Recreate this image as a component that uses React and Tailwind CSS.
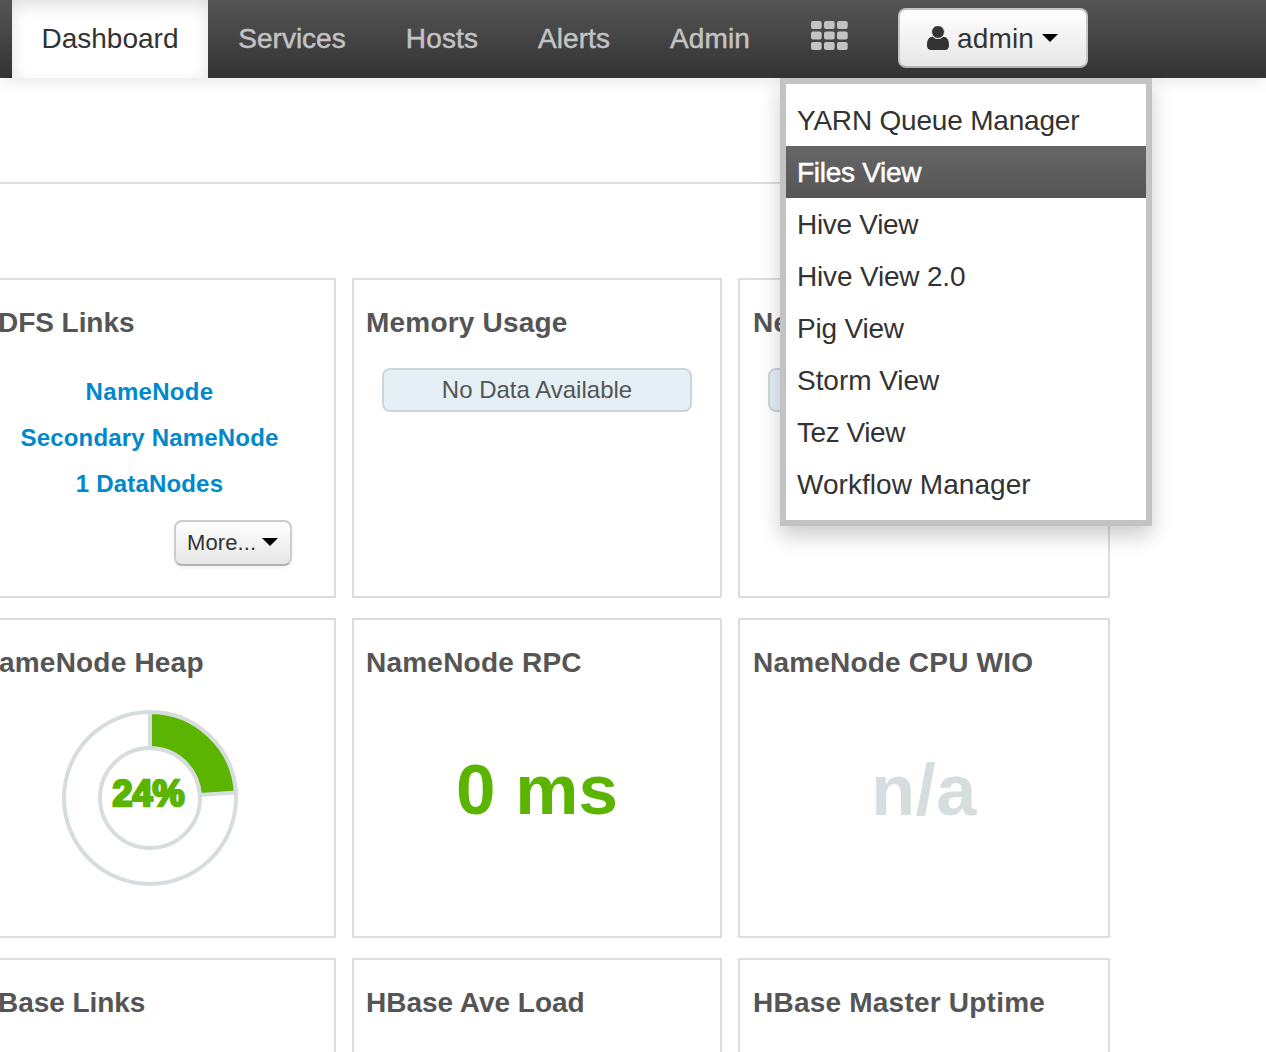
import React from "react";

const tabs = [
  { label: "Services", box: "w-[168px]" },
  { label: "Hosts", box: "w-[132px] tracking-[0.15px]" },
  { label: "Alerts", box: "w-[132px] tracking-[0.1px]" },
  { label: "Admin", box: "w-[140px] tracking-[0.1px]" },
];

const views = [
  { label: "YARN Queue Manager", tracking: "tracking-[-0.2px]" },
  { label: "Files View", tracking: "tracking-[-0.28px]", active: true },
  { label: "Hive View", tracking: "tracking-[-0.3px]" },
  { label: "Hive View 2.0", tracking: "tracking-[-0.18px]" },
  { label: "Pig View", tracking: "tracking-[-0.2px]" },
  { label: "Storm View", tracking: "tracking-[-0.05px]" },
  { label: "Tez View", tracking: "tracking-[-0.45px]" },
  { label: "Workflow Manager", tracking: "tracking-[0.05px]" },
];

function Caret() {
  return (
    <svg className="h-2 w-4 shrink-0" viewBox="0 0 16 8">
      <path d="M0 0H16L8 8Z" fill="#000" />
    </svg>
  );
}

function GridIcon() {
  const xs = [0, 13, 26];
  const ys = [0, 10.5, 21];
  return (
    <svg className="h-[29px] w-[37px]" viewBox="0 0 37 29">
      {ys.map((y) =>
        xs.map((x) => (
          <rect key={x + "-" + y} x={x} y={y} width="10.7" height="8" rx="2" fill="#c3c3c3" />
        ))
      )}
    </svg>
  );
}

function UserIcon() {
  return (
    <svg className="h-6 w-[22px] shrink-0" viewBox="0 0 22 24" fill="#333">
      <path d="M5.800 10.800C2 10.800 0 13.600 0 19.400C0 22.300 1.800 24 4.300 24H17.700C20.200 24 22 22.300 22 19.400C22 13.600 20 10.800 16.200 10.800C14.900 12.200 13.100 13 11 13S7.100 12.200 5.800 10.800Z" />
      <circle cx="11" cy="6" r="6.400" stroke="#f6f6f6" strokeWidth="0.8" />
    </svg>
  );
}

function NavBar() {
  return (
    <nav className="flex h-[78px] bg-linear-to-b from-[#555] to-[#333] pl-3 text-[28px] leading-[78px] text-[#c3c3c3] shadow-[0_2px_16px_rgba(0,0,0,0.1)]">
      <div className="w-[196px] bg-white text-center text-[#333] shadow-[inset_0_6px_16px_rgba(0,0,0,0.125)]">
        Dashboard
      </div>
      {tabs.map((t) => (
        <div key={t.label} className={t.box + " text-center [-webkit-text-stroke:0.5px_#c3c3c3]"}>
          {t.label}
        </div>
      ))}
      <div className="flex w-[98px] justify-center pt-[21px]">
        <GridIcon />
      </div>
      <button className="mt-2 ml-5 flex h-[60px] w-[190px] items-center rounded-lg border-2 border-[#c5c5c5] border-b-[#b3b3b3] bg-linear-to-b from-white to-[#e6e6e6] pl-[27px] leading-[56px] text-[#333]">
        <UserIcon />
        <span className="mt-0.5 mr-[8px] ml-2 tracking-[0.15px]">admin</span>
        <Caret />
      </button>
    </nav>
  );
}

function ViewsMenu() {
  return (
    <ul className="absolute top-[78px] left-[780px] w-[372px] border-6 border-[#c3c3c3] bg-white py-[10px] text-[28px] leading-[54px] text-[#333] shadow-[0_10px_20px_rgba(0,0,0,0.2)]">
      {views.map((v) => (
        <li
          key={v.label}
          className={
            (v.active
              ? "h-[52px] bg-linear-to-b from-[#666] to-[#555] pl-[11px] text-white [-webkit-text-stroke:0.5px_white] "
              : "h-[52px] pl-[11px] ") + v.tracking
          }
        >
          {v.label}
        </li>
      ))}
    </ul>
  );
}

function Card({ title, box, heading, children }) {
  return (
    <section className={"flex h-[320px] flex-col border-2 border-[#ddd] " + box}>
      <h2 className={"mt-[23px] h-[39px] text-[28px] leading-10 font-bold whitespace-nowrap text-[#555] " + heading}>
        {title}
      </h2>
      {children}
    </section>
  );
}

function NoData({ children, box }) {
  return (
    <div className={"mt-[26px] h-11 w-[310px] rounded-lg border-2 border-[#ccd6da] bg-[#e4f0f5] text-center text-2xl leading-10 text-[#555] " + box}>
      {children}
    </div>
  );
}

function HdfsLinks() {
  return (
    <div className="mt-[27px] flex flex-col text-2xl leading-[46px] font-bold text-[#08c]">
      <div className="flex w-[299px] flex-col text-center tracking-[0.18px]">
        <a className="tracking-[0.3px]">NameNode</a>
        <a>Secondary NameNode</a>
        <a>1 DataNodes</a>
      </div>
      <button className="mt-[13px] ml-[174px] flex h-[46px] w-[118px] items-center rounded-lg border-2 border-[#ccc] border-b-[#b3b3b3] bg-linear-to-b from-white to-[#e6e6e6] pl-[11px] text-[22px] leading-[42px] font-normal text-[#333] shadow-[0_2px_4px_rgba(0,0,0,0.05)]">
        <span className="mr-[6px] tracking-[0.1px]">More...</span>
        <span className="mb-0.5 flex">
          <Caret />
        </span>
      </button>
    </div>
  );
}

function HeapChart() {
  return (
    <svg className="mt-[26px] ml-[60px] h-[180px] w-[180px]" viewBox="0 0 180 180">
      <g fill="none" stroke="#d6dddf" strokeWidth="4">
        <circle cx="90" cy="90" r="86" />
        <circle cx="90" cy="90" r="50" />
        <path d="M90 4A86 86 0 0 1 175.800 84.600L139.900 86.900A50 50 0 0 0 90 40Z" fill="#5ab400" />
      </g>
      <text
        x="88.500"
        y="97.500"
        textAnchor="middle"
        className="fill-[#5ab400] stroke-[#5ab400] text-[36px] font-bold"
        strokeWidth="2.600"
        textLength="72"
      >
        24%
      </text>
    </svg>
  );
}

export default function App() {
  return (
    <div className="relative h-[1052px] w-[1266px] overflow-hidden bg-white font-['Liberation_Sans',Arial,sans-serif]">
      <NavBar />
      <div className="h-[106px] w-[1110px] border-b-2 border-[#ddd]" />
      <main className="mt-[94px] grid w-[1110px] grid-cols-[336px_370px_372px] gap-x-4 gap-y-5">
        <Card title="DFS Links" box="border-l-0" heading="-ml-[2px] tracking-[-0.05px]">
          <HdfsLinks />
        </Card>
        <Card title="Memory Usage" box="pl-[12px]" heading="tracking-[0.2px]">
          <NoData box="ml-[16px]">No Data Available</NoData>
        </Card>
        <Card title="Ne" box="pl-[13px]" heading="tracking-[0.2px]">
          <NoData box="ml-[15px]" />
        </Card>
        <Card title="ameNode Heap" box="border-l-0" heading="-ml-[1px] tracking-[0.2px]">
          <HeapChart />
        </Card>
        <Card title="NameNode RPC" box="pl-[12px]" heading="tracking-[0.22px]">
          <div className="mt-[68px] mr-[12px] text-center text-[71px] leading-[80px] font-bold text-[#5ab400]">0 ms</div>
        </Card>
        <Card title="NameNode CPU WIO" box="pl-[13px]" heading="tracking-[0.2px]">
          <div className="mt-[68px] mr-[13px] text-center text-[72px] leading-[80px] font-bold tracking-[0.5px] text-[#d6dddf]">
            n/a
          </div>
        </Card>
        <Card title="Base Links" box="border-l-0" heading="-ml-[2px] tracking-[-0.05px]" />
        <Card title="HBase Ave Load" box="pl-[12px]" heading="tracking-[-0.02px]" />
        <Card title="HBase Master Uptime" box="pl-[13px]" heading="tracking-[0.22px]" />
      </main>
      <ViewsMenu />
    </div>
  );
}
